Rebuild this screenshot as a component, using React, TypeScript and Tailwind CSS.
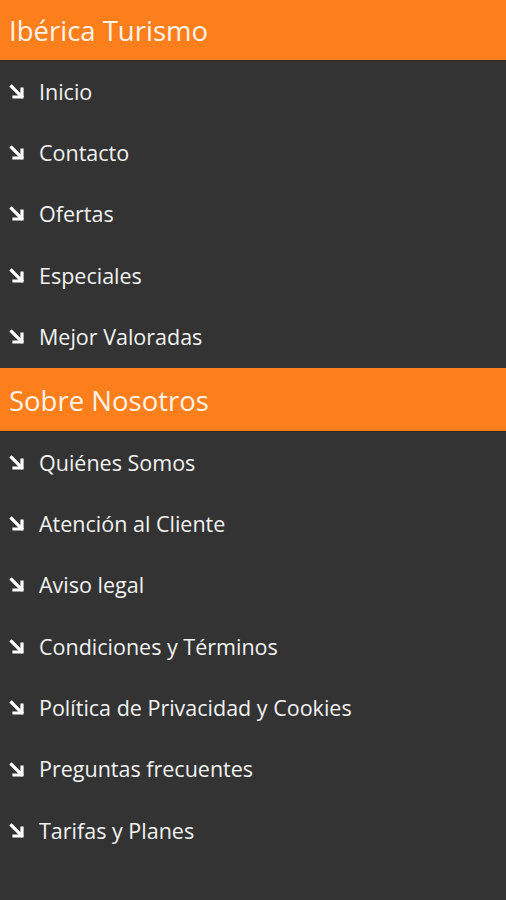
const menu = ['Inicio', 'Contacto', 'Ofertas', 'Especiales', 'Mejor Valoradas'];
const about = [
  'Quiénes Somos',
  'Atención al Cliente',
  'Aviso legal',
  'Condiciones y Términos',
  'Política de Privacidad y Cookies',
  'Preguntas frecuentes',
  'Tarifas y Planes',
];

function Arrow() {
  return (
    <svg width="16" height="16" viewBox="0 0 16 16" className="shrink-0">
      <path d="M2.5 2.5 L12.5 12.5" stroke="#fff" strokeWidth="3.2" strokeLinecap="square" fill="none" />
      <path d="M5 13 H13 V5" stroke="#fff" strokeWidth="3.2" strokeLinecap="square" fill="none" />
    </svg>
  );
}

function Item({ label }: { label: string }) {
  return (
    <div className="h-[61.4px] flex items-center pl-[9px]">
      <Arrow />
      <span className="ml-[14px] text-[21.5px] text-[#f2f2f2]">{label}</span>
    </div>
  );
}

function Header({ title, h }: { title: string; h: string }) {
  return (
    <div className={`${h} bg-[#fd7f1c] flex items-center pl-[9px] pt-[2px] border-b border-[#2a2a2a]`}>
      <span className="text-[27.5px] text-[#fdf3ea]">{title}</span>
    </div>
  );
}

export default function App() {
  return (
    <div
      className="w-[506px] h-[900px] bg-[#333333] overflow-hidden"
      style={{ fontFamily: '"Open Sans", "Noto Sans", sans-serif' }}
    >
      <Header title="Ibérica Turismo" h="h-[61px]" />
      {menu.map((m) => (
        <Item key={m} label={m} />
      ))}
      <Header title="Sobre Nosotros" h="h-[64px]" />
      {about.map((m) => (
        <Item key={m} label={m} />
      ))}
    </div>
  );
}
